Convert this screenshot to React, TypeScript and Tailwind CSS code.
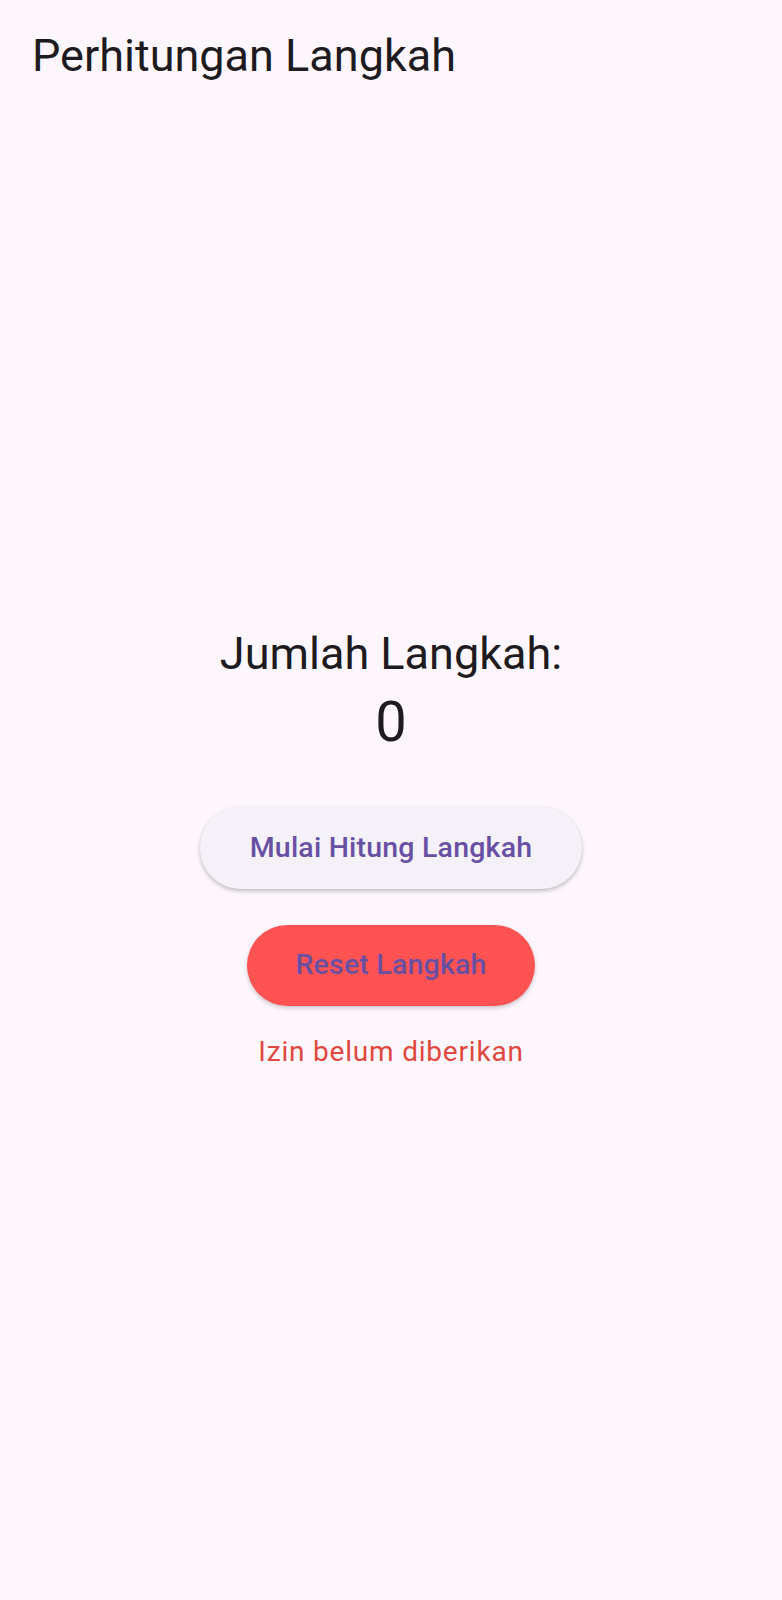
import React from "react";

export default function App() {
  return (
    <div
      className="min-h-[1600px] w-full bg-[#fdf7fd] flex flex-col"
      style={{ fontFamily: "Roboto, 'Noto Sans', sans-serif" }}
    >
      <header className="h-[112px] flex items-center pl-[32px]">
        <h1 className="text-[45px] leading-[52px] text-[#1d1b20] font-normal">
          Perhitungan Langkah
        </h1>
      </header>
      <main className="flex flex-col items-center pt-[510px]">
        <p className="text-[45px] leading-[64px] text-[#1d1b20]">Jumlah Langkah:</p>
        <p className="text-[56px] leading-[72px] text-[#1d1b20]">0</p>
        <button className="mt-[49px] w-[382px] h-[82px] rounded-full bg-[#f5f1f8] text-[#6750a4] text-[28.5px] tracking-[0.2px] font-medium shadow-[0_2px_4px_rgba(0,0,0,0.25)]">
          Mulai Hitung Langkah
        </button>
        <button className="mt-[36px] w-[288px] h-[81px] rounded-full bg-[#ff5252] text-[#6750a4] text-[28.5px] tracking-[0.2px] font-medium shadow-[0_2px_4px_rgba(0,0,0,0.2)]">
          Reset Langkah
        </button>
        <p className="mt-[26px] text-[28px] tracking-[0.8px] leading-[40px] text-[#e0483e]">Izin belum diberikan</p>
      </main>
    </div>
  );
}
